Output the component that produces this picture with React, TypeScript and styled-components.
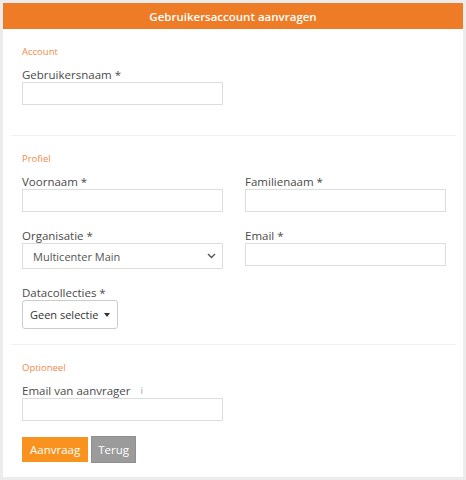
import styled, { createGlobalStyle } from "styled-components";

const GlobalStyle = createGlobalStyle`
    html, body {
        margin: 0;
        padding: 0;
        background: #ececec;
    }
    body {
        font-family: "Open Sans", "Noto Sans", sans-serif;
        color: #555;
    }
    * { box-sizing: border-box; }
`;

const App = () => {
    return (
        <>
            <GlobalStyle />
            <Page>
                <Card>
                    <Header>Gebruikersaccount aanvragen</Header>
                    <Body>
                        <Section $bottom={30}>
                            <SectionTitle>Account</SectionTitle>
                            <Field>
                                <Label>Gebruikersnaam *</Label>
                                <TextInput />
                            </Field>
                        </Section>

                        <Section $divider $bottom={15}>
                            <SectionTitle>Profiel</SectionTitle>
                            <Grid>
                                <Field>
                                    <Label>Voornaam *</Label>
                                    <TextInput />
                                </Field>
                                <Field>
                                    <Label>Familienaam *</Label>
                                    <TextInput />
                                </Field>
                                <Field>
                                    <Label>Organisatie *</Label>
                                    <Select>
                                        <span>Multicenter Main</span>
                                        <svg width="9" height="6" viewBox="0 0 9 6">
                                            <path d="M1 1 L4.5 4.5 L8 1" fill="none" stroke="#555" strokeWidth="1.4" />
                                        </svg>
                                    </Select>
                                </Field>
                                <Field>
                                    <Label>Email *</Label>
                                    <TextInput />
                                </Field>
                                <Field>
                                    <Label>Datacollecties *</Label>
                                    <DropdownButton>
                                        <span>Geen selectie</span>
                                        <Caret />
                                    </DropdownButton>
                                </Field>
                            </Grid>
                        </Section>

                        <Section $divider $bottom={14}>
                            <SectionTitle>Optioneel</SectionTitle>
                            <Field>
                                <Label>
                                    Email van aanvrager
                                    <InfoIcon>i</InfoIcon>
                                </Label>
                                <TextInput />
                            </Field>
                            <Actions>
                                <Button $variant="primary">Aanvraag</Button>
                                <Button $variant="secondary">Terug</Button>
                            </Actions>
                        </Section>
                    </Body>
                </Card>
            </Page>
        </>
    );
};

export default App;

const Page = styled.div`
    width: 466px;
    height: 480px;
    padding: 3px 3px 5px 3px;
`;

const Card = styled.div`
    width: 460px;
    background: #fff;
    display: flex;
    flex-direction: column;
`;

const Header = styled.div`
    flex-shrink: 0;
    height: 26px;
    background: #ee7b25;
    color: #fff;
    font-size: 11.5px;
    font-weight: 600;
    display: flex;
    align-items: center;
    justify-content: center;
`;

const Body = styled.div`
    padding: 0 7px 0 8px;
`;

const Section = styled.div<{ $divider?: boolean; $bottom: number }>`
    padding: 15px 11px ${(p) => p.$bottom}px 11px;
    border-top: ${(p) => (p.$divider ? "1px solid #f0f0f0" : "none")};
`;

const SectionTitle = styled.div`
    color: #f08a4b;
    font-size: 9.5px;
    line-height: 15px;
    margin-bottom: 8px;
`;

const Grid = styled.div`
    display: grid;
    grid-template-columns: 201px 200px;
    column-gap: 22px;
    row-gap: 16px;
    align-items: start;
`;

const Field = styled.div`
    display: flex;
    flex-direction: column;
    align-items: flex-start;
`;

const Label = styled.label`
    display: flex;
    align-items: center;
    font-size: 11.5px;
    line-height: 15px;
    color: #4a4a4a;
    white-space: nowrap;
`;

const InfoIcon = styled.span`
    margin-left: 10px;
    font-size: 8px;
    font-weight: 700;
    color: #c4c4c4;
`;

const TextInput = styled.input`
    width: 201px;
    height: 23px;
    border: 1px solid #ddd;
    background: #fff;
    padding: 0 8px;
    font-family: inherit;
    outline: none;
`;

const Select = styled.div`
    width: 201px;
    height: 26px;
    border: 1px solid #ddd;
    background: #fff;
    padding: 0 6px 0 10px;
    display: flex;
    align-items: center;
    justify-content: space-between;
    font-size: 11px;
    color: #555;
`;

const DropdownButton = styled.div`
    width: 96px;
    height: 29px;
    border: 1px solid #ccc;
    border-radius: 3px;
    background: #fff;
    padding: 0 7px 0 7px;
    display: flex;
    align-items: center;
    justify-content: space-between;
    font-size: 11px;
    color: #333;
    white-space: nowrap;
`;

const Caret = styled.span`
    width: 0;
    height: 0;
    border-left: 3.5px solid transparent;
    border-right: 3.5px solid transparent;
    border-top: 4px solid #333;
`;

const Actions = styled.div`
    display: flex;
    align-items: center;
    gap: 3px;
    margin-top: 15px;
`;

const Button = styled.button<{ $variant: "primary" | "secondary" }>`
    font-family: inherit;
    font-size: 11.5px;
    color: #fff;
    cursor: pointer;
    padding: 0 ${(p) => (p.$variant === "primary" ? "7px" : "6px")};
    height: ${(p) => (p.$variant === "primary" ? "25px" : "27px")};
    border: 1px solid ${(p) => (p.$variant === "primary" ? "#f7931e" : "#8f8f8f")};
    background: ${(p) => (p.$variant === "primary" ? "#f7931e" : "#9b9b9b")};
`;
